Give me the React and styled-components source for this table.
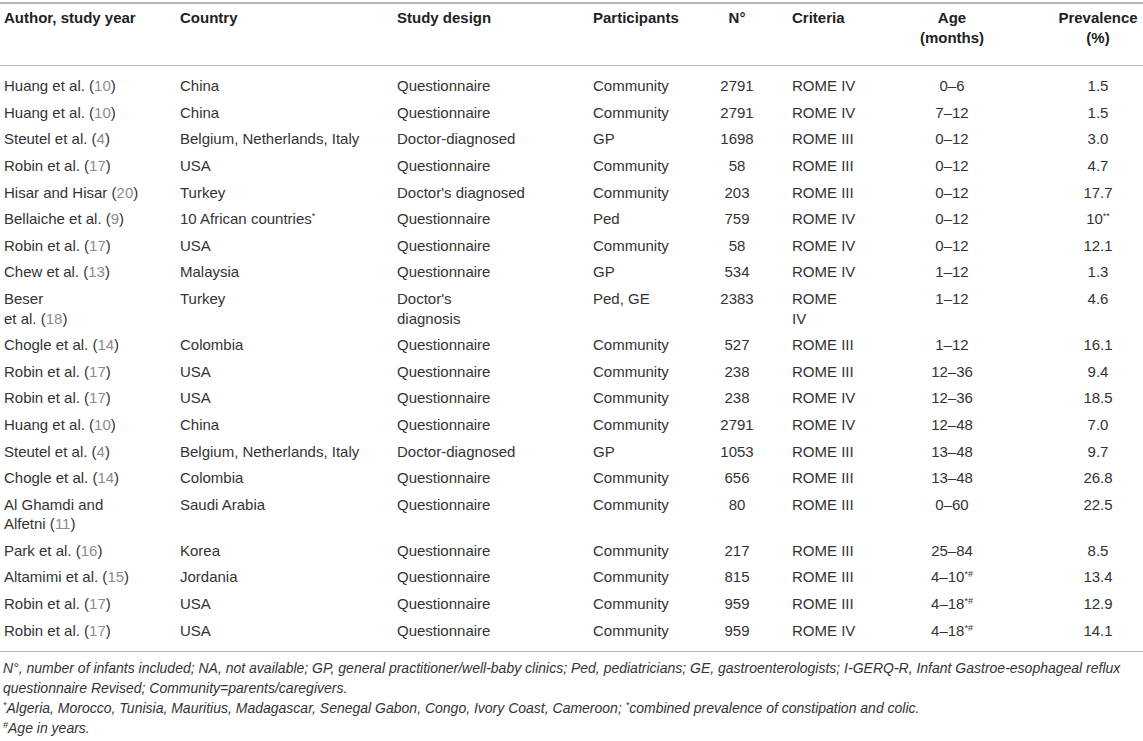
import styled, { createGlobalStyle } from "styled-components";

const GlobalStyle = createGlobalStyle`
  body {
    margin: 0;
    background: #fff;
    font-family: "Liberation Sans", Arial, sans-serif;
    color: #333;
  }
`;

const rows = [
  ["Huang et al.", "10", "China", "Questionnaire", "Community", "2791", "ROME IV", "0–6", "1.5"],
  ["Huang et al.", "10", "China", "Questionnaire", "Community", "2791", "ROME IV", "7–12", "1.5"],
  ["Steutel et al.", "4", "Belgium, Netherlands, Italy", "Doctor-diagnosed", "GP", "1698", "ROME III", "0–12", "3.0"],
  ["Robin et al.", "17", "USA", "Questionnaire", "Community", "58", "ROME III", "0–12", "4.7"],
  ["Hisar and Hisar", "20", "Turkey", "Doctor's diagnosed", "Community", "203", "ROME III", "0–12", "17.7"],
  ["Bellaiche et al.", "9", "10 African countries*", "Questionnaire", "Ped", "759", "ROME IV", "0–12", "10**"],
  ["Robin et al.", "17", "USA", "Questionnaire", "Community", "58", "ROME IV", "0–12", "12.1"],
  ["Chew et al.", "13", "Malaysia", "Questionnaire", "GP", "534", "ROME IV", "1–12", "1.3"],
  ["Beser\net al.", "18", "Turkey", "Doctor's\ndiagnosis", "Ped, GE", "2383", "ROME\nIV", "1–12", "4.6"],
  ["Chogle et al.", "14", "Colombia", "Questionnaire", "Community", "527", "ROME III", "1–12", "16.1"],
  ["Robin et al.", "17", "USA", "Questionnaire", "Community", "238", "ROME III", "12–36", "9.4"],
  ["Robin et al.", "17", "USA", "Questionnaire", "Community", "238", "ROME IV", "12–36", "18.5"],
  ["Huang et al.", "10", "China", "Questionnaire", "Community", "2791", "ROME IV", "12–48", "7.0"],
  ["Steutel et al.", "4", "Belgium, Netherlands, Italy", "Doctor-diagnosed", "GP", "1053", "ROME III", "13–48", "9.7"],
  ["Chogle et al.", "14", "Colombia", "Questionnaire", "Community", "656", "ROME III", "13–48", "26.8"],
  ["Al Ghamdi and\nAlfetni", "11", "Saudi Arabia", "Questionnaire", "Community", "80", "ROME III", "0–60", "22.5"],
  ["Park et al.", "16", "Korea", "Questionnaire", "Community", "217", "ROME III", "25–84", "8.5"],
  ["Altamimi et al.", "15", "Jordania", "Questionnaire", "Community", "815", "ROME III", "4–10*#", "13.4"],
  ["Robin et al.", "17", "USA", "Questionnaire", "Community", "959", "ROME III", "4–18*#", "12.9"],
  ["Robin et al.", "17", "USA", "Questionnaire", "Community", "959", "ROME IV", "4–18*#", "14.1"],
];

const widths = [176, 217, 196, 97, 102, 63, 202, 90];

// split trailing * / # marks into a superscript
const withSup = (text) => {
  const m = text.match(/^(.*?)([*#]+)$/);
  if (!m) return text;
  return (
    <>
      {m[1]}
      <Sup>{m[2]}</Sup>
    </>
  );
};

const lines = (text) =>
  text.split("\n").map((part, i) => (
    <span key={i}>
      {i > 0 && <br />}
      {part}
    </span>
  ));

const App = () => {
  return (
    <Page>
      <GlobalStyle />
      <Table>
        <colgroup>
          {widths.map((w, i) => (
            <col key={i} style={{ width: w }} />
          ))}
        </colgroup>
        <thead>
          <tr>
            <Th>Author, study year</Th>
            <Th>Country</Th>
            <Th>Study design</Th>
            <Th>Participants</Th>
            <Th $center>N°</Th>
            <Th>Criteria</Th>
            <Th $center>
              Age
              <br />
              (months)
            </Th>
            <Th $center>
              Prevalence
              <br />
              (%)
            </Th>
          </tr>
        </thead>
        <tbody>
          {rows.map((r, idx) => {
            const [author, ref, country, design, part, n, crit, age, prev] = r;
            return (
              <Row key={idx}>
                <Td>
                  {lines(author)} (<Cite>{ref}</Cite>)
                </Td>
                <Td>{withSup(country)}</Td>
                <Td>{lines(design)}</Td>
                <Td>{part}</Td>
                <Td $center>{n}</Td>
                <Td>{lines(crit)}</Td>
                <Td $center>{withSup(age)}</Td>
                <Td $center>{withSup(prev)}</Td>
              </Row>
            );
          })}
        </tbody>
      </Table>
      <Notes>
        <Note>
          N°, number of infants included; NA, not available; GP, general
          practitioner/well-baby clinics; Ped, pediatricians; GE, gastroenterologists;
          I-GERQ-R, Infant Gastroe-esophageal reflux questionnaire Revised;
          Community=parents/caregivers.
        </Note>
        <Note>
          <Sup>*</Sup>Algeria, Morocco, Tunisia, Mauritius, Madagascar, Senegal Gabon,
          Congo, Ivory Coast, Cameroon; <Sup>*</Sup>combined prevalence of constipation
          and colic.
        </Note>
        <Note>
          <Sup>#</Sup>Age in years.
        </Note>
      </Notes>
    </Page>
  );
};

export default App;

const Page = styled.div`
  width: 1143px;
  padding-top: 2px;
`;

const Table = styled.table`
  width: 1143px;
  table-layout: fixed;
  border-collapse: collapse;
  border-top: 2px solid #b5b5b5;
  border-bottom: 1px solid #b5b5b5;
  font-size: 15px;
  line-height: 19.6px;
`;

const Th = styled.th`
  text-align: ${(p) => (p.$center ? "center" : "left")};
  vertical-align: top;
  font-weight: bold;
  color: #222;
  padding: 4px 4px 18px;
  border-bottom: 1px solid #b5b5b5;
  white-space: nowrap;
`;

const Td = styled.td`
  text-align: ${(p) => (p.$center ? "center" : "left")};
  vertical-align: top;
  padding: 3.5px 4px;
  color: #333;
  white-space: nowrap;
`;

const Row = styled.tr`
  &:first-child td {
    padding-top: 10px;
  }

  &:last-child td {
    padding-bottom: 11px;
  }
`;

const Cite = styled.span`
  color: #8c8c8c;
`;

const Sup = styled.sup`
  font-size: 9px;
  line-height: 1;
  vertical-align: 5px;
`;

const Notes = styled.div`
  padding: 6px 3px 0;
`;

const Note = styled.p`
  margin: 0;
  font-size: 14px;
  font-style: italic;
  line-height: 20px;
  color: #333;
`;
